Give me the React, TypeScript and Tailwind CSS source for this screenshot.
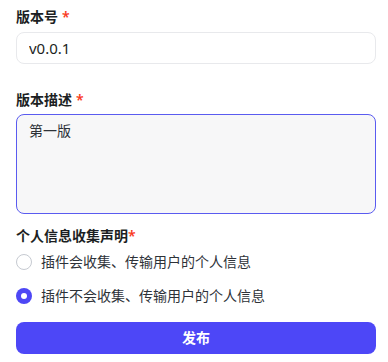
import { useState } from 'react';

const font = { fontFamily: '"Noto Sans", "Noto Sans CJK SC", sans-serif' };

function Label({ text, tight }: { text: string; tight?: boolean }) {
  return (
    <div className="flex h-5 items-center text-sm font-semibold text-[#1c1f23]">
      <span>{text}</span>
      <span className={`text-[#f93920] ${tight ? '' : 'ml-1'}`}>*</span>
    </div>
  );
}

export default function App() {
  const [choice, setChoice] = useState(1);
  const options = ['插件会收集、传输用户的个人信息', '插件不会收集、传输用户的个人信息'];
  return (
    <div className="flex w-[388px] flex-col bg-white pl-4 pr-3 pt-[7px]" style={font}>
      <Label text="版本号" />
      <input
        className="mt-[5px] h-8 w-full rounded-lg border border-[#e8e9ec] px-3 text-[15px] text-[#1c1f23] outline-none"
        defaultValue="v0.0.1"
      />
      <div className="mt-[26px]">
        <Label text="版本描述" />
      </div>
      <textarea
        className="mt-1 h-[100px] w-full resize-none rounded-lg border border-[#5a5bf0] bg-[#f7f7f8] px-3 py-[6px] text-sm leading-5 text-[#2e3238] outline-none"
        defaultValue="第一版"
      />
      <div className="mt-3">
        <Label text="个人信息收集声明" tight />
      </div>
      <div className="mt-1 flex flex-col">
        {options.map((o, i) => (
          <button
            key={o}
            onClick={() => setChoice(i)}
            className={`flex h-6 items-center gap-[9px] text-left text-sm text-[#2e3238] ${i === 1 ? 'mt-[10px]' : ''}`}
          >
            {choice === i ? (
              <span className="flex h-4 w-4 items-center justify-center rounded-full bg-[#4d47f5]">
                <span className="h-[6px] w-[6px] rounded-full bg-white" />
              </span>
            ) : (
              <span className="h-4 w-4 rounded-full border border-[#c6cad1] bg-white" />
            )}
            <span>{o}</span>
          </button>
        ))}
      </div>
      <button className="mt-[14px] h-8 w-full rounded-lg bg-[#4d47f7] text-sm font-semibold text-white">
        发布
      </button>
    </div>
  );
}
